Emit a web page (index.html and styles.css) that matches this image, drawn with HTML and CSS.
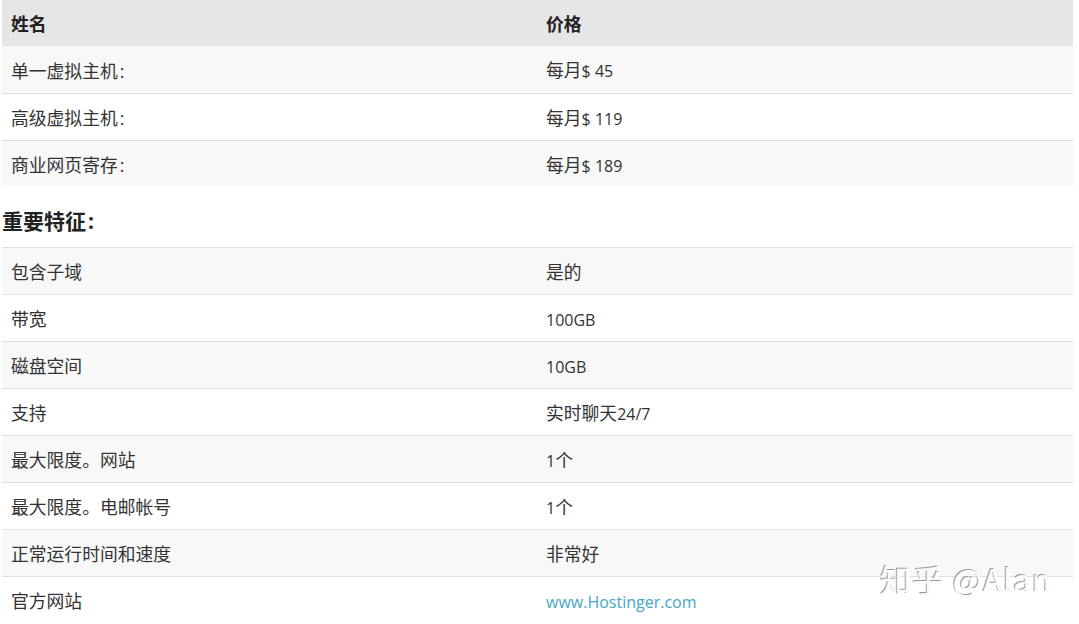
FILE: index.html
```html
<!DOCTYPE html>
<html lang="zh-CN">
<head>
<meta charset="utf-8">
<title>Hostinger</title>
<link rel="stylesheet" href="styles.css">
</head>
<body>
<div class="page">
  <table class="grid">
    <thead>
      <tr><th>姓名</th><th>价格</th></tr>
    </thead>
    <tbody>
      <tr class="odd"><td>单一虚拟主机<span class="colon">:</span></td><td>每月<span class="lat">$ 45</span></td></tr>
      <tr><td>高级虚拟主机<span class="colon">:</span></td><td>每月<span class="lat">$ 119</span></td></tr>
      <tr class="odd"><td>商业网页寄存<span class="colon">:</span></td><td>每月<span class="lat">$ 189</span></td></tr>
    </tbody>
  </table>
  <h3 class="section-title">重要特征<span class="colon">:</span></h3>
  <table class="grid features">
    <tbody>
      <tr class="odd"><td>包含子域</td><td>是的</td></tr>
      <tr><td>带宽</td><td><span class="lat">100GB</span></td></tr>
      <tr class="odd"><td>磁盘空间</td><td><span class="lat">10GB</span></td></tr>
      <tr><td>支持</td><td>实时聊天<span class="lat">24/7</span></td></tr>
      <tr class="odd"><td>最大限度。网站</td><td><span class="lat">1</span>个</td></tr>
      <tr><td>最大限度。电邮帐号</td><td><span class="lat">1</span>个</td></tr>
      <tr class="odd"><td>正常运行时间和速度</td><td>非常好</td></tr>
      <tr><td>官方网站</td><td><a class="link lat" href="#">www.Hostinger.com</a></td></tr>
    </tbody>
  </table>
  <div class="watermark">知乎 @Alan</div>
</div>
</body>
</html>
```
FILE: styles.css
```css
html, body {
  margin: 0;
  padding: 0;
  background: #fff;
}
body {
  font-family: "Open Sans", "Noto Sans CJK SC", sans-serif;
  font-size: 17.8px;
  color: #333;
  overflow: hidden;
}
.page {
  position: relative;
  padding: 0 0 0 2px;
  width: 1071px;
  height: 624px;
}
.grid {
  width: 1071px;
  border-collapse: collapse;
  table-layout: fixed;
}
.grid th,
.grid td {
  text-align: left;
  padding: 2px 9px 0;
  height: 44px;
  line-height: 24px;
  vertical-align: middle;
}
.grid th:first-child,
.grid td:first-child {
  width: 517px;
}
.lat {
  font-size: 16px;
}
.colon {
  font-family: "Open Sans", sans-serif;
  margin-left: 2px;
}
.grid thead th {
  background: #e6e6e6;
  font-weight: 700;
  color: #222;
  height: 44px;
}
.grid tbody tr {
  border-top: 1px solid #dedede;
}
.grid tbody tr.odd {
  background: #f8f8f8;
}
.grid thead + tbody tr:first-child {
  border-top: none;
}
.grid thead + tbody tr:first-child td {
  height: 45px;
}
.section-title {
  margin: 0;
  box-sizing: border-box;
  font-size: 21px;
  line-height: 28px;
  font-weight: 700;
  color: #222;
  height: 60px;
  padding-top: 20px;
}
.link {
  color: #45a7c3;
  text-decoration: none;
}
.watermark {
  position: absolute;
  left: 880px;
  top: 557px;
  font-family: "Noto Sans CJK SC", sans-serif;
  font-size: 31px;
  line-height: 44px;
  color: #fafafa;
  letter-spacing: 1.2px;
  text-shadow: -1px -1px 0 #9a9a9a, 1px 1px 0 #ffffff;
}
```
